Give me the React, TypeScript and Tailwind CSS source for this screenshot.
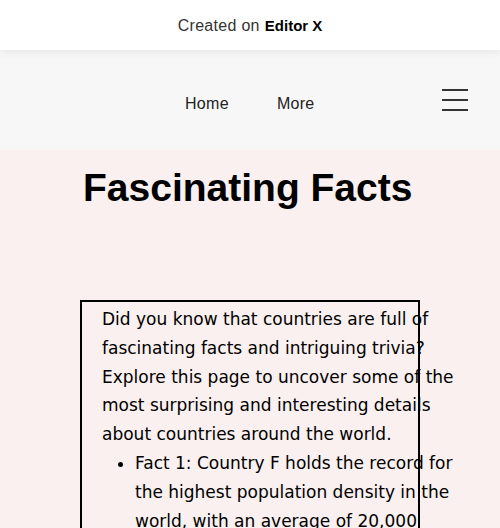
export default function App() {
  return (
    <div className="min-h-[528px] bg-[#f9f0ef] font-['Liberation_Sans',Arial,sans-serif]">
      <div className="relative z-10 flex h-[50px] items-center justify-center bg-white pt-[2px] text-[#333] shadow-[0_2px_8px_rgba(0,0,0,0.07)]">
        <span className="text-[16px] tracking-[0.3px]">Created on</span>
        <span className="ml-[5px] text-[15px] font-bold text-black">Editor X</span>
      </div>

      <nav className="flex h-[100px] items-center bg-[#f7f7f7]">
        <ul className="ml-[185px] flex gap-[48px] pt-[7px] text-[16px] tracking-[0.3px] text-[#222]">
          <li>Home</li>
          <li>More</li>
        </ul>
        <button className="ml-auto mr-[32px] flex w-[26px] flex-col gap-[8px]" aria-label="Menu">
          <span className="h-[2px] w-full bg-[#333]" />
          <span className="h-[2px] w-full bg-[#333]" />
          <span className="h-[2px] w-full bg-[#333]" />
        </button>
      </nav>

      <main className="px-[80px] pt-[15px]">
        <h1 className="pl-[3px] text-[39px] font-bold leading-[45px] text-black">Fascinating Facts</h1>

        <div className="mt-[90px] h-[240px] w-[340px] border-2 border-black pt-[3px]">
          <div className="ml-[20px] w-[360px] font-['DejaVu_Sans',sans-serif] text-[17px] leading-[28.8px] text-black">
            <p>
              Did you know that countries are full of fascinating facts and intriguing trivia? Explore this
              page to uncover some of the most surprising and interesting details about countries around the
              world.
            </p>
            <ul className="list-disc pl-[33px]">
              <li>
                Fact 1: Country F holds the record for the highest population density in the world, with an
                average of 20,000 people per square kilometer.
              </li>
            </ul>
          </div>
        </div>
      </main>
    </div>
  )
}
